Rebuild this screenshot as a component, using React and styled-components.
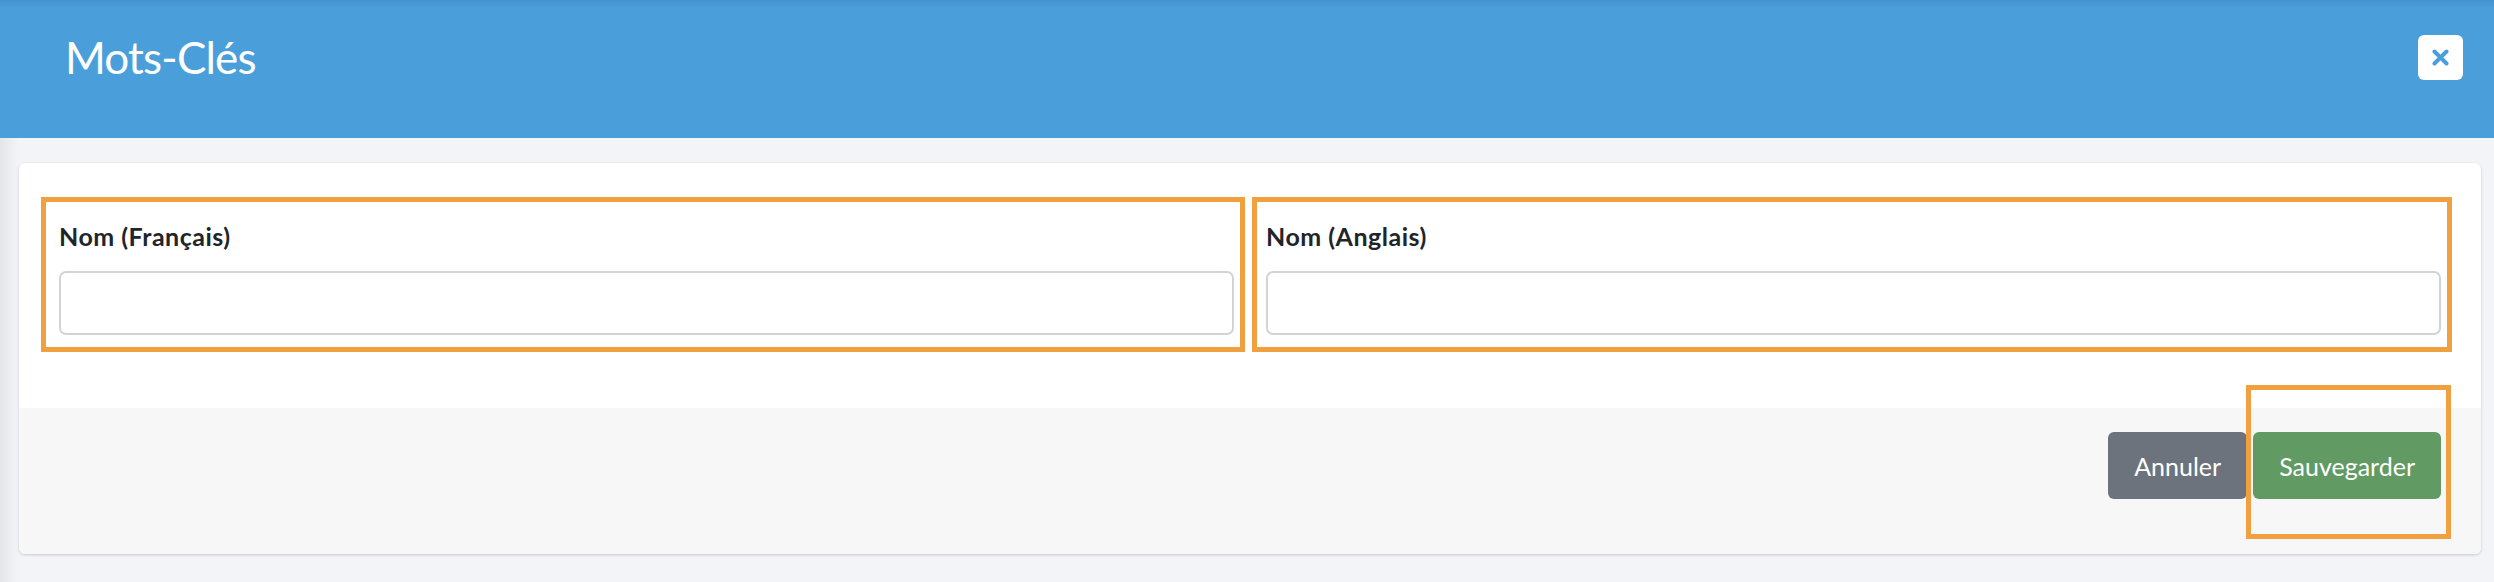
import React from 'react';
import styled, { createGlobalStyle } from 'styled-components';

const GlobalStyle = createGlobalStyle`
    html, body {
        margin: 0;
        padding: 0;
        background: #f3f4f7;
        font-family: Lato, "Open Sans", sans-serif;
    }
    * {
        box-sizing: border-box;
    }
`;

const Page = styled.div`
    min-height: 582px;
    background: linear-gradient(to right, #e4e5e9 0px, #f3f4f7 18px);
`;

const Header = styled.header`
    height: 138px;
    padding: 35px 31px 0 65px;
    display: flex;
    align-items: flex-start;
    justify-content: space-between;
    background: linear-gradient(to bottom, #4392d0 0px, #4a9fdb 8px);
`;

const Title = styled.h1`
    margin: 0;
    font-size: 44px;
    line-height: 45px;
    font-weight: 400;
    letter-spacing: -0.8px;
    color: #ffffff;
`;

const CloseButton = styled.button`
    width: 45px;
    height: 45px;
    border: none;
    border-radius: 6px;
    background: #ffffff;
    display: flex;
    align-items: center;
    justify-content: center;
    padding: 0;
    cursor: pointer;
`;

const Main = styled.main`
    padding: 25px 13px 28px 19px;
`;

const Card = styled.section`
    background: #ffffff;
    border-radius: 6px;
    box-shadow: 0 1px 3px rgba(0, 0, 0, 0.18);
    overflow: hidden;
`;

const CardBody = styled.div`
    padding: 34px 29px 56px 22px;
`;

const Row = styled.div`
    display: flex;
    gap: 7px;
`;

const Field = styled.div`
    flex: 1;
    border: 5px solid #f0a03e;
    padding: 19px 6px 12px ${(p) => p.$padLeft}px;
`;

const Label = styled.label`
    display: block;
    font-size: 25px;
    line-height: 30px;
    font-weight: 700;
    letter-spacing: 0.5px;
    color: #212529;
    margin-bottom: 20px;
`;

const Input = styled.input`
    display: block;
    width: 100%;
    height: 64px;
    border: 2px solid #d0d3d8;
    border-radius: 7px;
    background: #ffffff;
    font-size: 25px;
    padding: 0 18px;
    outline: none;
`;

const Footer = styled.div`
    background: #f7f7f7;
    padding: 24px 40px 55px 0;
    display: flex;
    justify-content: flex-end;
    gap: 6px;
`;

const Button = styled.button`
    height: 67px;
    padding: 0 26px;
    border: none;
    border-radius: 6px;
    font-family: inherit;
    font-size: 25px;
    color: #ffffff;
    background: ${(p) => (p.$variant === 'save' ? '#619a63' : '#6c737c')};
    cursor: pointer;
`;

const Highlight = styled.div`
    position: relative;
    display: flex;

    &::after {
        content: '';
        position: absolute;
        top: -47px;
        bottom: -40px;
        left: -7px;
        right: -10px;
        border: 5px solid #f0a03e;
        pointer-events: none;
    }
`;

const App = () => {
    return (
        <Page>
            <GlobalStyle />
            <Header>
                <Title>Mots-Clés</Title>
                <CloseButton aria-label="Fermer">
                    <svg width="17" height="17" viewBox="0 0 17 17">
                        <path
                            d="M2.5 2.5 L14.5 14.5 M14.5 2.5 L2.5 14.5"
                            stroke="#4a9fdb"
                            strokeWidth="4"
                            strokeLinecap="round"
                        />
                    </svg>
                </CloseButton>
            </Header>
            <Main>
                <Card>
                    <CardBody>
                        <Row>
                            <Field $padLeft={13}>
                                <Label>Nom (Français)</Label>
                                <Input type="text" />
                            </Field>
                            <Field $padLeft={9}>
                                <Label>Nom (Anglais)</Label>
                                <Input type="text" />
                            </Field>
                        </Row>
                    </CardBody>
                    <Footer>
                        <Button>Annuler</Button>
                        <Highlight>
                            <Button $variant="save">Sauvegarder</Button>
                        </Highlight>
                    </Footer>
                </Card>
            </Main>
        </Page>
    );
};

export default App;
